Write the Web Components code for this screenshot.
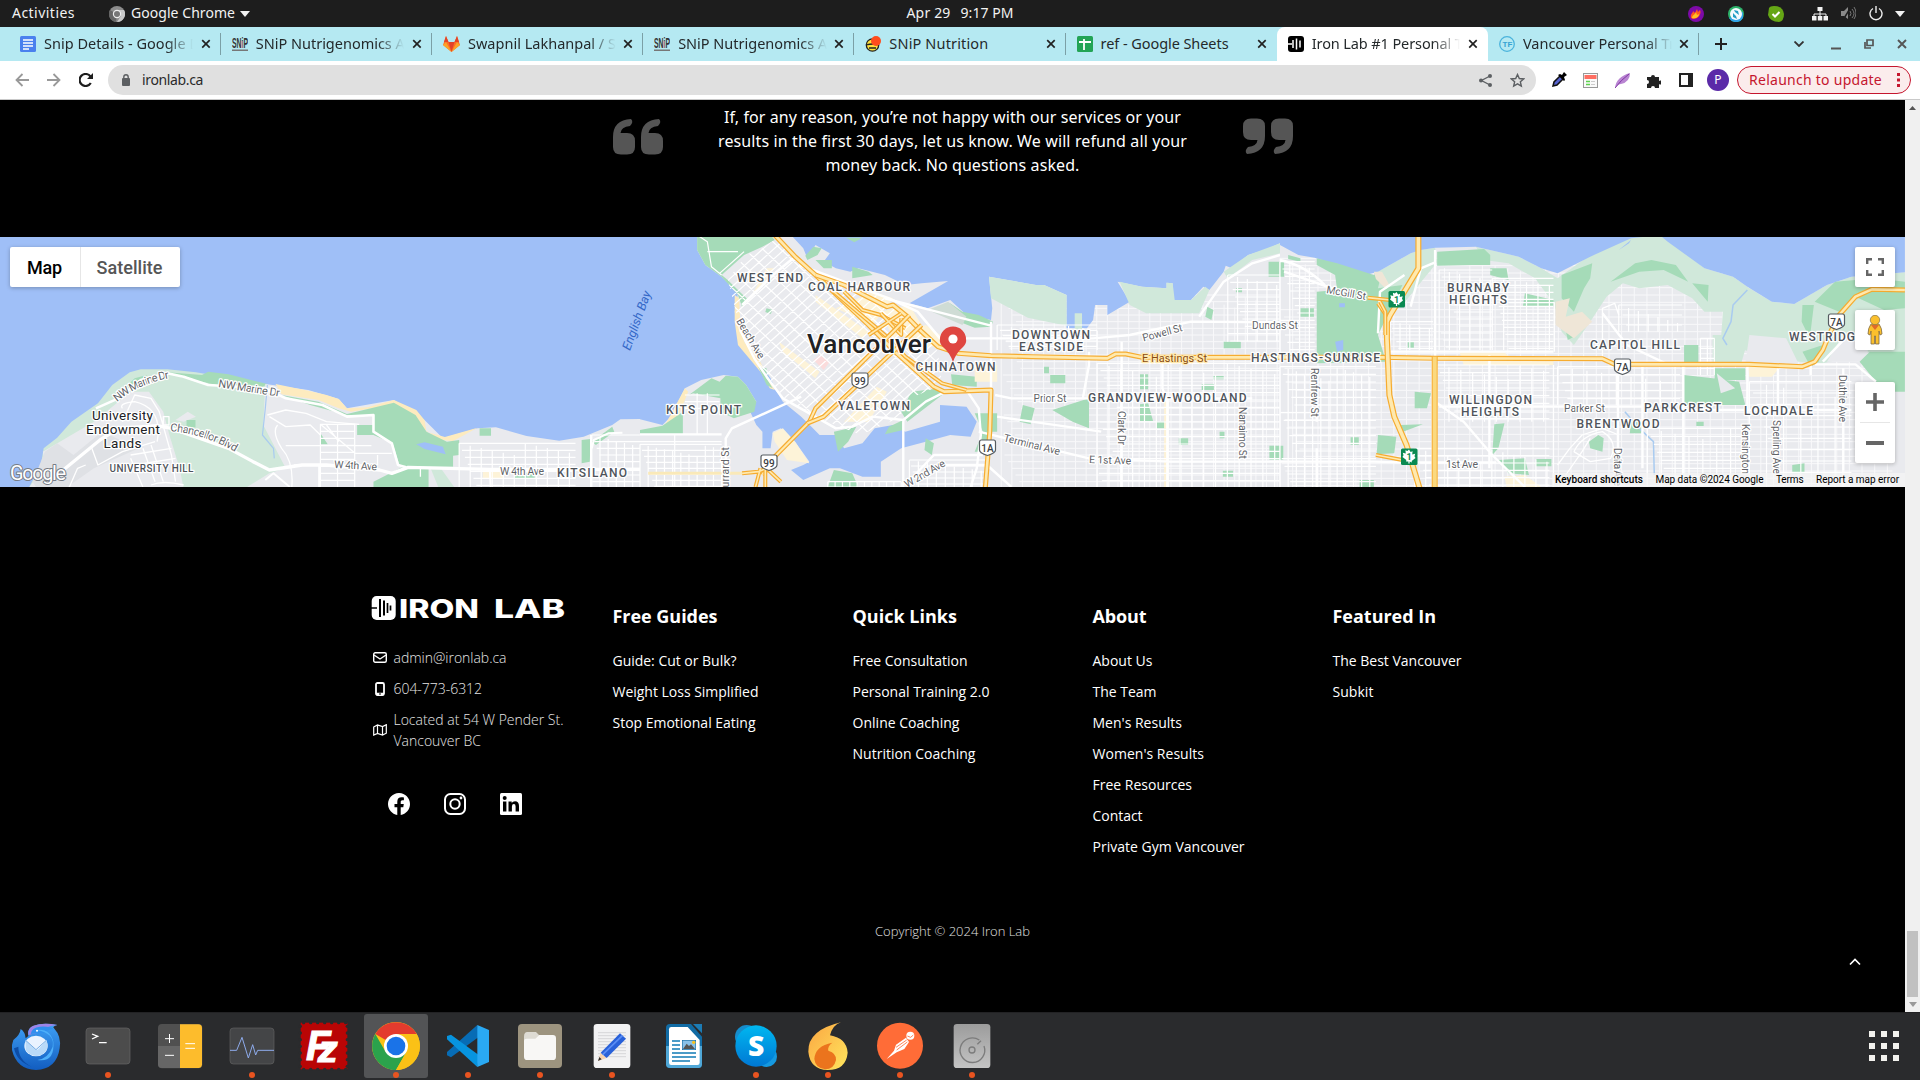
<!DOCTYPE html>
<html lang="en"><head><meta charset="utf-8"><title>Iron Lab #1 Personal Training</title>
<style>html,body{margin:0;width:1920px;height:1080px;overflow:hidden;background:#000}</style></head>
<body><desk-top></desk-top>
<script>
const def=(name,css,html)=>customElements.define(name,class extends HTMLElement{
  constructor(){super();this.attachShadow({mode:'open'}).innerHTML=`<style>*{box-sizing:border-box}svg{display:block;flex:none}${css}</style>${typeof html==='function'?html(this):html}`}
});
const UI='font-family:"Noto Sans","Open Sans",sans-serif;';

def('desk-top',':host{display:flex;flex-direction:column;width:1920px;height:1080px;overflow:hidden}',
`<system-bar></system-bar><tab-strip></tab-strip><tool-bar></tool-bar><page-view></page-view><app-dock></app-dock>`);

/* ---------- system bar ---------- */
def('system-bar',`:host{display:flex;height:27px;flex:none;background:#1d1d1d;color:#f2f2f2;${UI}font-size:14px;line-height:25px;justify-content:space-between;padding:0 14px 0 12px}
div{display:flex;align-items:center}fit-text{height:27px}.l,.r{width:520px}.c{padding-left:2px;gap:10px}.r{justify-content:flex-end;padding-right:1px}`,
`<div class="l"><fit-text w="63">Activities</fit-text>
<svg style="margin:0 6px 0 34px" width="16" height="16" viewBox="0 0 16 16"><circle cx="8" cy="8" r="8" fill="#8c8c8c"/><path d="M8 8L1 4A8 8 0 0 0 7 16z" fill="#666"/><path d="M8 4h7A8 8 0 0 1 8 16l4-6z" fill="#c9c9c9"/><circle cx="8" cy="8" r="4.2" fill="#eee"/><circle cx="8" cy="8" r="3" fill="#777"/></svg>
<fit-text w="104">Google Chrome</fit-text><svg style="margin-left:5px" width="10" height="6"><path d="M0 0h10L5 6z" fill="#f2f2f2"/></svg></div>
<div class="c"><fit-text w="44">Apr 29</fit-text><fit-text w="53">9:17 PM</fit-text></div>
<div class="r">
<svg width="16" height="16"><circle cx="8" cy="8" r="8" fill="#7d0aa8"/><path d="M3 12C2 8 5 7 5 5l2 2 2-4 1 3 2-2c2 4-2 9-7 9z" fill="#ff5a1f"/><path d="M4 12c0-3 3-3 4-6l1 3 2-1c0 3-3 5-7 4z" fill="#ffc222"/></svg>
<svg style="margin-left:24px" width="16" height="16"><circle cx="8" cy="8" r="8" fill="#2db36a"/><path d="M1 12A8 8 0 0 0 15 12L15 6z" fill="#31a3e8"/><circle cx="8" cy="8" r="6" fill="#f4fbff"/><path d="M6 4l4 1 1 4-4-3zM5 7l3 3 1 3-4-2z" fill="#239ec4"/></svg>
<svg style="margin-left:24px" width="16" height="16"><path d="M1 2Q2 0 6 0Q15 0 16 8Q16 15 11 16Q2 16 0 9z" fill="#65a615"/><path d="M4.500 8l2.500 2.500L11.500 6" stroke="#fff" stroke-width="2" fill="none"/></svg>
<svg style="margin-left:28px" width="16" height="14"><path d="M5.500 0h5v4h-5zM0 9h4.500v4.500H0zM5.800 9h4.500v4.500H5.800zM11.500 9H16v4.500h-4.500z" fill="#f2f2f2"/><path d="M8 4v5M2 9V7h12v2" stroke="#f2f2f2" fill="none"/></svg>
<svg style="margin-left:13px" width="15" height="15"><path d="M0 5h3l4-4v12L3 10H0z" fill="#898989"/><path d="M9 5q2 2.500 0 5M11 3q4 4.500 0 9M13 1q4 6 0 12" stroke="#777" fill="none"/><path d="M2 14L10 1" stroke="#1d1d1d" stroke-width="1.500"/></svg>
<svg style="margin-left:13px" width="14" height="15"><path d="M4 2.500A6 6 0 1 0 10 2.500M7 0v7" stroke="#eee" stroke-width="1.400" fill="none"/></svg>
<svg style="margin-left:12px" width="10" height="6"><path d="M0 0h10L5 6z" fill="#f2f2f2"/></svg></div>`);

/* ---------- tabs ---------- */
def('chrome-tab',`:host{display:flex;align-items:center;position:relative;width:211.200px;height:34px;padding:0 9px 0 11px;flex:none;border-right:1px solid #719aa0;border-image:linear-gradient(#0000 7px,#7ba0a6 7px,#7ba0a6 27px,#0000 27px) 1}
:host([first]){width:211.800px}:host([noline]){border-color:transparent;border-image:none}
:host([active]){background:#fff;border-radius:8px 8px 0 0;border-color:transparent;border-image:none}
.t{width:149px;margin-left:8px;padding-bottom:2px;overflow:hidden;white-space:nowrap;-webkit-mask-image:linear-gradient(90deg,#000 82%,#0000 100%)}
:host([short]) .t{-webkit-mask-image:none}svg{margin-left:7.500px}`,
`<slot name="icon"></slot><div class="t"><slot></slot></div><svg width="10" height="10"><path d="M1.200 1.200l7.500 7.500M8.700 1.200L1.200 8.700" stroke="#222" stroke-width="1.700"/></svg>`);
const snip='<svg slot="icon" width="16" height="16"><text x="0" y="12" font-family="Liberation Sans" font-weight="bold" font-size="14" textLength="16" lengthAdjust="spacingAndGlyphs" fill="#333">SNiP</text><rect y="13.500" width="16" height="1.500" fill="#777"/><path d="M10 5v7" stroke="#e9a" /></svg>';
def('tab-strip',`:host{display:flex;height:34px;flex:none;background:#b5e9f2;padding-left:9px;align-items:center;${UI}font-size:14.500px;color:#24292b}svg{flex:none}`,
`<chrome-tab first><svg slot="icon" width="16" height="16"><rect width="16" height="16" rx="1.500" fill="#4a80ee"/><path d="M3 4h10M3 7h10M3 10h10M3 13h6" stroke="#fff" stroke-width="1.500"/></svg><fit-text w="156">Snip Details - Google D</fit-text></chrome-tab>
<chrome-tab>${snip}<fit-text w="149">SNiP Nutrigenomics A</fit-text></chrome-tab>
<chrome-tab><svg slot="icon" width="17" height="16" viewBox="0 0 17 16"><path d="M0 9L3 0l2.500 6h6L14 0l3 9-8.500 7z" fill="#fc6d26"/><path d="M5.500 6h6l-3 10z" fill="#e24329"/><path d="M0 9l8.500 7L3 6zM17 9l-8.500 7L14 6z" fill="#fca326"/><path d="M3 0l2.500 6H1zM14 0l-2.500 6H16z" fill="#e24329"/></svg><fit-text w="148">Swapnil Lakhanpal / S</fit-text></chrome-tab>
<chrome-tab>${snip}<fit-text w="149">SNiP Nutrigenomics A</fit-text></chrome-tab>
<chrome-tab short><svg slot="icon" width="16" height="16"><circle cx="7.500" cy="9" r="6.200" fill="#ffe13a" stroke="#222" stroke-width="1.300"/><path d="M1 9q7-2 13 0M4 12h7" stroke="#222" stroke-width="1.300" fill="none"/><circle cx="11" cy="5" r="5" fill="#ff4d1d"/></svg><fit-text w="99">SNiP Nutrition</fit-text></chrome-tab>
<chrome-tab short noline><svg slot="icon" width="16" height="16"><rect width="16" height="16" rx="1.500" fill="#23a455"/><path d="M2 6h12M7 3v11" stroke="#fff" stroke-width="1.800"/></svg><fit-text w="128">ref - Google Sheets</fit-text></chrome-tab>
<chrome-tab active><svg slot="icon" width="16" height="16"><rect width="16" height="16" rx="3" fill="#000"/><path d="M0 8h4M5 4v8M8.500 2.500v11M12 4.500v7" stroke="#fff" stroke-width="1.500"/></svg><fit-text w="151">Iron Lab #1 Personal T</fit-text></chrome-tab>
<chrome-tab><svg slot="icon" width="16" height="16"><circle cx="8" cy="8" r="7.300" fill="#b5e9f2" stroke="#4ab3dc" stroke-width="1.300"/><text x="3.500" y="11" font-family="Liberation Sans" font-weight="bold" font-size="8" fill="#36a3d2">TF</text></svg><fit-text w="152">Vancouver Personal Tr</fit-text></chrome-tab>
<svg style="margin-left:16px" width="12" height="12"><path d="M6 0v12M0 6h12" stroke="#222" stroke-width="2"/></svg>
<svg style="margin-left:67px" width="10" height="6"><path d="M.5.5L5 5 9.500.5" stroke="#333" stroke-width="1.800" fill="none"/></svg>
<svg style="margin-left:27px" width="10" height="11"><path d="M0 9.500h10" stroke="#555" stroke-width="2"/></svg>
<svg style="margin-left:23px" width="10" height="10"><path d="M3 1h6v5.500H3zM1 3v6h6" stroke="#555" stroke-width="1.700" fill="none"/></svg>
<svg style="margin-left:23px" width="10" height="10"><path d="M1 1l8 8M9 1L1 9" stroke="#555" stroke-width="1.900"/></svg>`);

/* ---------- toolbar ---------- */
def('tool-bar',`:host{display:flex;height:39px;flex:none;background:#fff;border-bottom:1px solid #c9c9c9;align-items:center;padding-left:15px;${UI}font-size:14px}
.o{display:flex;align-items:center;width:1428px;height:30px;border-radius:15px;background:#e0e0e0;margin-left:15px;padding:0 11px 0 14px;color:#2b2b2b}
fit-text{padding-bottom:1px}.o fit-text{margin-left:12px;flex:1}.p{width:22px;height:22px;border-radius:50%;background:#5b2aa8;color:#fff;font-size:12px;line-height:22px;text-align:center;margin-left:14px}
.u{display:flex;align-items:center;width:174px;height:28px;margin-left:8px;border:1.500px solid #c5162e;border-radius:14px;background:#fbecec;color:#c5162e;padding-left:11px}`,
`<svg width="14" height="14"><path d="M14 7H1.500M7.500 1L1.500 7l6 6" stroke="#999" stroke-width="1.800" fill="none"/></svg>
<svg style="margin-left:18px" width="14" height="14"><path d="M0 7h12.500M6.500 1l6 6-6 6" stroke="#999" stroke-width="1.800" fill="none"/></svg>
<svg style="margin-left:18px" width="14" height="14"><path d="M11.800 10A6 6 0 1 1 11.500 3.500" stroke="#1d1d1d" stroke-width="2.200" fill="none"/><path d="M14 0v6H8z" fill="#1d1d1d"/></svg>
<div class="o"><svg width="8" height="12"><rect y="4" width="8" height="8" rx="1" fill="#5c5f62"/><path d="M1.800 5V3a2.200 2.200 0 0 1 4.400 0v2" stroke="#5c5f62" stroke-width="1.400" fill="none"/></svg><fit-text w="61">ironlab.ca</fit-text>
<svg width="13" height="13"><path d="M11 2L2.500 6.500 11 11" stroke="#5c5f62" stroke-width="1.400" fill="none"/><circle cx="11" cy="2" r="2" fill="#5c5f62"/><circle cx="2" cy="6.500" r="2" fill="#5c5f62"/><circle cx="11" cy="11" r="2" fill="#5c5f62"/></svg>
<svg style="margin-left:18px" width="15" height="15" viewBox="0 0 24 24"><path d="M12 2.500l2.900 6.300 6.900.7-5.200 4.600 1.500 6.800L12 17.400l-6.100 3.500 1.500-6.800L2.200 9.500l6.900-.7z" stroke="#5c5f62" stroke-width="2.300" fill="none"/></svg></div>
<svg style="margin-left:15px" width="16" height="16"><path d="M2 14l1-4 6-6 3 3-6 6z" fill="#5663cf" stroke="#111" stroke-width="1.500"/><path d="M7 3l2-1 2 1 2-3 3 3-3 2 1 3-1 1z" fill="#000"/></svg>
<svg style="margin-left:16px" width="15" height="15"><rect x=".5" y=".5" width="14" height="14" fill="#fafafa" stroke="#999"/><rect x="1.500" y="2" width="12" height="4" fill="#ff6e62"/><path d="M3 8.500h4M3 11.500h4" stroke="#5fd14f" stroke-width="1.500"/><path d="M8 8.500h4M8 11.500h4" stroke="#ccc"/></svg>
<svg style="margin-left:17px" width="15" height="15"><path d="M0 15Q1 4 15 0q0 9-9 11-3 0-6 4z" fill="#b985d2"/><path d="M0 15Q6 7 14 1" stroke="#8137a5" fill="none"/></svg>
<svg style="margin-left:16px" width="15" height="15"><path d="M1 4h4a2 2 0 1 1 4 0h4v4a2 2 0 1 1 0 3v4H9a2 2 0 0 0-4 0H1v-4a2 2 0 0 0 0-4z" fill="#222"/></svg>
<svg style="margin-left:18px" width="14" height="14"><rect x="1" y="1" width="12" height="12" stroke="#222" stroke-width="2" fill="#fff"/><path d="M9 0h5v14H9z" fill="#222"/></svg>
<div class="p">P</div><div class="u"><fit-text w="133">Relaunch to update</fit-text><svg style="margin-left:15px" width="4" height="14"><path d="M0 0h3v3H0zM0 5.500h3v3H0zM0 11h3v3H0z" fill="#c5162e"/></svg></div>`);

/* ---------- page ---------- */
def('page-view',':host{display:flex;height:912px;flex:none;background:#000}main{width:1905px;height:912px;display:flex;flex-direction:column;position:relative}.up{position:absolute;left:1849px;top:858px}',
`<main><guarantee-quote></guarantee-quote><city-map></city-map><site-footer></site-footer><svg class="up" width="12" height="8"><path d="M1 6.500L6 1.500l5 5" stroke="#fff" stroke-width="1.700" fill="none"/></svg></main><scroll-bar></scroll-bar>`);
def('scroll-bar',':host{display:flex;flex-direction:column;align-items:center;justify-content:space-between;width:15px;height:912px;background:#f0f0f0;padding:6px 0 5px}i{width:11px;height:66px;background:#c1c1c1;margin:0 auto 5px;display:block}div{display:flex;flex-direction:column;align-items:center}',
`<svg width="7" height="4"><path d="M0 4h7L3.500 0z" fill="#555"/></svg><div><i></i><svg width="8" height="5"><path d="M0 0h8L4 5z" fill="#999"/></svg></div>`);
def('guarantee-quote',`:host{display:flex;height:137px;flex:none;justify-content:center;align-items:flex-start;gap:55px;color:#fff;font:16px/24px "Noto Sans",sans-serif}
div{display:flex;flex-direction:column;align-items:center;width:470px;padding-top:5px}svg{margin-top:18px}`,
`<svg width="50" height="37" viewBox="0 0 50 37"><g fill="#555"><path d="M18 1Q0 2 0 19V29Q0 36.500 8 36.500H14Q22 36.500 22 29V23Q22 15 14 15H7.500Q8 9 17 8Q21 4 18 1Z"/><path transform="translate(28)" d="M18 1Q0 2 0 19V29Q0 36.500 8 36.500H14Q22 36.500 22 29V23Q22 15 14 15H7.500Q8 9 17 8Q21 4 18 1Z"/></g></svg>
<div><fit-text w="457">If, for any reason, you’re not happy with our services or your</fit-text><fit-text w="469">results in the first 30 days, let us know. We will refund all your</fit-text><fit-text w="254">money back. No questions asked.</fit-text></div>
<svg width="50" height="37" viewBox="0 0 50 37"><g transform="rotate(180 25 18.500)" fill="#555"><path d="M18 1Q0 2 0 19V29Q0 36.500 8 36.500H14Q22 36.500 22 29V23Q22 15 14 15H7.500Q8 9 17 8Q21 4 18 1Z"/><path transform="translate(28)" d="M18 1Q0 2 0 19V29Q0 36.500 8 36.500H14Q22 36.500 22 29V23Q22 15 14 15H7.500Q8 9 17 8Q21 4 18 1Z"/></g></svg>`);

/* ---------- map ---------- */
const grid=(x0,y0,x1,y1,dx,dy,skip=0)=>{let d='';let n=0;for(let x=x0;x<=x1;x+=dx)d+=`M${x},${y0+((n++*skip)%(dy*2))}V${y1}`;n=0;for(let y=y0;y<=y1;y+=dy)d+=`M${x0+((n++*skip)%(dx*2))},${y}H${x1}`;return d};
const lines=(d,w=1.3,c='#fff')=>`<path d="${d}" fill="none" stroke="${c}" stroke-width="${w}" vector-effect="non-scaling-stroke" stroke-linejoin="round"/>`;
const hw=(d,w=5)=>lines(d,w,'#f6ac30')+lines(d,w-2.400,'#ffe9ae');
const poly=(d,c)=>`<path d="${d}z" fill="${c}"/>`;
const G='#a5dbb8',L='#d0e8da',W='#9fbff7',S='#fdebbf',D='#e9eaee',Y='#fdf3d8';
const tag=(t,x,y,w,s,cls='',r=0)=>`<text class="${cls}" font-size="${s}" transform="translate(${x},${y}) rotate(${r})" textLength="${w}">${t}</text>`;
const shield=(t,x,y)=>`<path d="M${x-6},${y-7.500}h12q2 0 2 2v8q0 3-8 5.500q-8-2.500-8-5.500v-8q0-2 2-2z" fill="#fff" stroke="#555b60" stroke-width="1.200"/><text class="sh" x="${x}" y="${y+4}" text-anchor="middle" font-size="10">${t}</text>`;
const leaf=(x,y)=>`<rect x="${x-8}" y="${y-8}" width="16.500" height="16.500" rx="1.500" fill="#0b8a52"/><path transform="translate(${x},${y})" d="M0-7l1.600 2.500 2-.8-.4 3.300 3-.8-.7 2.600 1 1.600-3.800 3 .2 1.500L.6 5v2h-1.200V5l-2.300-.1.200-1.500-3.800-3 1-1.600-.7-2.600 3 .8-.4-3.300 2 .8z" fill="#fff"/><text class="lf" x="${x}" y="${y+3.500}" text-anchor="middle" font-size="9">1</text>`;

const west=[
 poly('M70,760L100,690 107,640 140,608 175,560 240,505 275,450 318,412 345,403 410,403 480,412 640,445 720,470V760',L),
 poly('M290,478L330,430 360,420 345,450zM410,412L495,420 510,410 560,418 655,447 640,458 540,452 440,425',G),
 poly('M105,650L230,560 290,500 320,470 365,470 400,530 415,600 440,700 450,760H70L110,690',D),
 poly('M80,740L110,650 140,625 180,660 250,590 340,640 230,700 160,760H90','#dfe1e5'),
 poly('M650,447L755,465 830,492 850,520 965,495 1040,555 1085,610 1170,580 1215,577 1290,603 1370,617 1430,605 1500,570 1520,553 1568,552V760H600L660,715 700,700 645,570',D),
 poly('M430,555L460,530 480,545 450,560',D),poly('M457,555h22v22h-22',G),
 poly('M675,447L755,467 800,480 830,492 850,520 900,517 965,495 1020,525 1040,555 1045,590 1090,606 1170,578 1110,618 1080,615 1035,580 1000,530 960,510 860,530 830,520 780,495 690,478',S),
 poly('M690,480L780,500 850,537 965,503 1018,540 1045,590 1095,620 1125,615V660L1110,662V695H980L962,625 915,600H875V570H915V540H850L760,510',G),
 poly('M915,740L985,697H1050V760H915M785,595L803,628H785zM1175,580h28v22h-28zM1425,615L1447,612 1445,680 1425,685zM1450,620L1500,575 1505,590 1460,630M1260,715h50v14h-50',G),
 poly('M1055,700H1080L1115,760H1075',L),
 poly('M1020,628L1040,622 1085,635 1092,658 1040,642',W),
 poly('M1183,700h50v30h-50',Y),
 lines('M655,450L650,520 643,600 670,640 672,670',1.2,'#a9cbf0'),
 lines(grid(1125,625,1410,756,27,21,7),1.2),lines(grid(1450,600,1568,756,20,20,6),1.2),lines(grid(785,568,870,756,42,21),1.2),lines('M700,632H910M870,655H960M720,690H910M925,660V690M1030,700V725'),
 lines('M655,540L700,525 750,535 800,560 880,568M660,545L700,575 760,570 785,600M680,570Q665,590 690,640Q720,680 715,756M785,568L870,655M800,570L830,620'),
 lines('M300,560L330,480 370,490 390,530 420,660 430,740M300,520Q290,505 330,500Q400,520 385,620M225,640L240,690 300,650 380,620M320,670L350,756M350,640L380,740M370,630L400,740M320,660L420,640M330,690L430,670M170,756L190,700 210,690M370,750Q400,735 450,750M400,545h14v25h-14z'),
 lines('M155,705L245,615 290,580 385,572 420,580 560,640 620,680 660,705 740,690 800,690 930,705 960,715 1000,697 1200,703 1568,703',3.300),
 lines('M235,520L290,490 345,435 410,415 450,425 510,450 650,460 700,490 790,510 850,545 915,540V590L960,625 975,690 995,697',2.600),
 lines('M1450,640L1455,615 1490,595 1525,593M1448,600V756M782,690V756M1200,703L1202,756M650,735L670,715 710,756',2)
].join('');

let dt='';for(let i=-40;i<60;i++)dt+=`M${i*27},760L${i*27+690},0`;for(let i=-30;i<60;i++)dt+=`M${i*44},0L${i*44+660},760`;
const centre=[
 `<rect width="1569" height="765" fill="${D}"/>`,
 lines(grid(885,180,1568,756,26,20,9),1,'#f8f8fa'),
 poly('M0,0H140V45L160,90 200,125 240,175 232,230 240,290 250,330 290,380 320,430 335,470 350,500 395,545 420,575 440,600 480,600 500,640 545,625 575,580 620,570 650,590 735,560 735,510 800,515 825,560 810,605 760,600 700,620 640,640 590,680 590,725 545,725 490,700 465,700 400,735 370,705 400,690 415,680 380,620 345,580 325,590 320,640 300,640 300,590 285,570 270,530 285,500 260,450 240,425 205,420 150,435 110,460 75,545 55,570 0,553',W),
 poly('M370,0L400,40 410,70 430,30 465,55 450,80 480,100 515,110 535,100 600,120 650,150 690,145 755,138 660,205 705,220 760,195 800,240 860,255 863,220 855,125 970,150 990,150 1045,180V280H1095L1110,255 1115,210H1145V240L1200,200 1170,140 1230,155 1290,160V143L1305,145V195L1350,195 1380,155 1395,165 1430,110 1435,92 1450,100 1490,60 1530,45 1568,25V0',W),
 poly('M140,0H320L330,15 300,35 255,60 200,120 215,135 265,195 250,215 240,180 200,125 160,90 140,45M405,62L425,35 445,40 435,60 410,75M505,8h40L525,22M520,95L560,110 570,120 520,130M430,75h40v25H450M760,205L790,230 830,240 865,260 860,275 820,278 760,250',G),
 poly('M855,125L970,150 990,150 1045,180V272L950,248 860,190M1175,140L1230,155 1290,160V143L1305,145 1310,195 1350,195 1385,155 1395,165 1370,235 1240,235 1200,210M1065,235h18v50h-18M1430,110L1490,60 1568,25V55L1500,75 1440,130',L),
 poly('M705,225L755,200 800,245 790,270',"#cfdcd5"),
 poly('M232,180L243,190 245,250 255,320 290,370 330,465 318,460 295,410 240,330 232,260M110,460L118,470 95,540 60,572 75,540',S),
 poly('M325,595L350,580 380,620 415,685 360,675 330,620',Y),
 poly('M120,480L175,430 195,440 210,422 240,425 260,450 285,500 280,530 230,550 197,530V490L130,475M0,585L55,572 105,530V598H0M290,395L310,400V430L325,460 310,450M310,220l15,5-5,12-13-6M640,530L665,470 735,460 740,480 655,560M475,590L530,575 510,620 485,650M610,575L645,555V585L600,598M762,418L825,425V455L765,450M930,560L938,510 967,520 957,568M1010,525L1100,490V580L1060,560M820,535h55v55h-20l-10,60h-25l20-60zM700,610L720,625 715,660 697,645M475,705L520,715 535,756H460zM990,395h12v20h-12M1005,420h37v25h-37M1225,418h20v45h-20M1225,508L1245,505 1257,558H1225zM1265,560h23v20h-23M1320,610h23v20h-23M1430,320h42v20h-42M1376,448h30v17h-30M1405,423h25v10h-25M1428,707h25v18h-25M1420,590h12v20h-12M1540,80h28v45h-28M1542,632h26v42h-26M1460,160l15,0v12h-15M1390,215l15,10-5,30-15-10',G),
 poly('M480,220L570,170 620,190 570,270zM340,320L440,410 430,430 350,350zM430,180L560,290 545,310 430,200zM500,560L580,455 605,470 560,560zM590,230L660,210 690,270 620,310zM310,100h20L270,190zM640,300L700,270 760,320 700,340zM1284,500h12v256h-12zM820,390h55v50h-55z',Y),
 poly('M425,375L440,360 465,380 450,405','#fbdcdc'),
 `<clipPath id="dc"><path d="M215,135L260,60 300,40 335,10 430,120 600,190 690,290 730,350 740,450 640,500 640,545 540,600 500,580 420,540 350,485 310,420 250,300z"/></clipPath><g clip-path="url(#dc)">${lines(dt,1.2)}</g>`,
 lines('M140,0L165,20 175,95 200,120M255,50L195,115M165,50L240,50M110,480H195M110,500H195M110,520H195M140,475V598M165,475V598M0,620H200M85,600V756',1.2),
 lines(grid(0,628,200,756,20,18,5)+grid(1120,385,1568,756,29,22,8)+grid(1440,120,1568,320,24,22,6)+grid(460,740,640,756,18,16)+grid(660,675,850,756,22,18,4)+grid(875,270,1120,345,35,16,7),1.2),
 lines('M245,285L280,370 310,425 350,490 480,580 520,575 570,545 645,555 700,500 740,475 800,465 830,520 835,600 825,700 810,756M600,190L860,272M645,555V756M210,756V610L225,580 395,485M0,598H200M830,590L1100,670 1300,680 1568,680M740,310H1110L1200,300 1350,260 1568,262M1370,245L1430,140 1500,85 1568,60M875,545L1130,590M740,690L850,690 910,756M1180,320V756M870,480L910,490H1500M1280,360V460L1292,500V756M650,750L720,660H840M860,260V470M1100,350V390L1085,490',2.400),
 lines('M390,90L610,190 680,230 735,310M250,210L335,110 385,60',2.500),
 hw('M330,0L380,65 430,120 560,270 625,350 720,455 745,470 860,465 857,590 846,760'),
 hw('M430,120L500,150 605,215 620,210 650,240 690,290 730,335 780,355 860,362 960,365 1145,370 1165,357 1190,357 1230,367 1568,367'),
 hw('M465,160L600,300 650,365 740,445 800,465',4),hw('M500,170L545,225 590,240 650,280',4),hw('M590,235L640,300 640,250M560,300L640,235',4),
 hw('M330,665L415,560 430,520 620,290 660,240',4.500),hw('M410,565L450,545 620,350 690,270',4.500),hw('M300,720L330,665',5),hw('M250,715L290,710 310,700 345,740M283,756L295,700M307,756V700',4),
 lines('M20,715H250',3,'#fae9b8')
].join('');

const east=[
 `<rect width="1540" height="765" fill="${D}"/>`,
 lines(grid(0,70,1500,756,31,22,9),1,'#f8f8fa'),
 poly('M230,115L255,100 320,55 345,45 380,38 385,82 300,210 240,160M480,35L585,65 640,100 680,130 690,190 670,205 625,130 560,85 500,75M680,130L760,60 860,0H940L1040,100 1110,125 1150,160 1205,200 1260,207 1340,150 1400,125 1531,112V360L1450,350 1330,385 1270,380 1200,360 1150,350 1080,320 1085,230 1040,230 1010,190 950,150 880,160 840,145 800,185 760,260 720,330 690,290 670,200M1060,300H1150L1130,385H1060',L),
 poly('M1150,300L1240,310 1270,385H1140zM1380,300H1440V380H1340z',D),
 poly('M0,0V30L45,60 85,68 140,90 210,120 240,110 255,100 320,55 345,45 380,38 480,35 585,65 640,100 680,115 760,65 860,10 930,0 950,20 1040,100 1110,125 1145,155 1205,200 1260,207 1340,150 1400,125 1531,112V0',W),
 poly('M90,70L140,85 230,120 250,110 240,160 300,150 240,300 260,380 90,385V170L140,165 135,120 90,90M385,50L500,42 515,60V90H470L385,92M0,75h10v50H0M50,220h33v25H50M20,60L50,70V80L20,72M515,100l40,0 5,35-45-15M600,175L670,195V215H595M690,120L765,85 760,130 745,160 720,230 690,190M810,140L870,85 910,75 970,90 1000,140 940,105 880,110zM1010,145L1050,150 1048,200zM1280,210h28l-10,100-20,-50M1310,200L1360,140 1460,130 1531,140V220L1480,225 1410,185 1370,230zM990,330h35v60h-35M990,420L1060,430 1125,440 1140,510H990M1280,350L1330,330 1320,380 1300,395M1445,350H1531V470H1480L1420,380M330,470L370,475 360,520H330M525,568L550,565 535,640 520,660M350,568l-55,25V570M240,600L285,605 280,655 237,658M535,675L600,670 610,720 560,715M627,672h38v22h-38M757,620L780,600 793,610 790,650 760,640M1255,690l30-5v30h-30M860,560h30l-5,35h-28M1065,400h75v35h-75M195,735h35v21h-35M173,607h20v22h-20M700,285l15-10 5,30-15,10M313,320h15v20h-15M0,632h8v42H0M1020,560h18v13h-18',G),
 poly('M230,110h20l18,40-8,12-25-30M675,200L710,190 700,245 740,230 765,260 720,310 675,270','#efe6d7'),
 poly('M440,352H550L560,365H670V390H450M1147,395L1230,390 1205,425 1150,425M550,725L600,720 640,756H555',Y),
 poly('M1070,415L1115,460 1080,475',D),
 poly('M135,320l20-5v30l-15,5M145,205h14v12h-14M830,45L860,15 855,25',W),
 lines('M1145,165L1110,210 1105,260 1085,310 1095,330M845,530L880,580 915,620 917,720',1.5,'#a9cbf0'),lines('M1225,148h18v55',1.500,W),
 lines(grid(0,80,85,360,24,22,6)+grid(0,395,235,756,20,23,7)+grid(390,105,520,345,25,21,6)+grid(520,130,670,345,28,21,4)+grid(270,260,375,345,24,20,5)+grid(385,390,660,560,29,23,7)+grid(330,640,660,756,27,22,7)+grid(830,210,985,290,24,30,9)+grid(680,395,980,510,36,24,6)+grid(900,580,1130,756,34,24,8)+grid(1150,440,1400,756,42,34,9)+grid(1030,310,1065,420,17,30),1.200),
 lines('M680,690L710,640 740,600 790,580 830,600M700,720L740,650 760,610M720,650Q740,600 790,590Q830,620 810,670L760,680 720,650M790,371V220L820,205 830,240M670,390V756M672,350V203H560'),
 lines('M790,235L850,330 945,385M380,500L450,560 520,660 600,756M0,680H230L300,682H530M390,515H890M920,525H1400M380,45V370M270,350H670M988,388V756M1145,388V540M1220,395V540M1380,400V756M1310,388H1410L1460,440M1300,388V420M1330,380L1400,290M828,420V756M320,215L345,100 380,82M240,295L245,170 305,120M90,400V560M90,640V756M0,75Q60,90 110,150M10,110L140,165M513,360V700M888,388V700',2.400),
 hw('M0,367H250L380,370 790,371 820,388 1150,388 1280,395 1310,380 1330,345 1345,300 1370,240 1410,185 1450,163 1531,165'),
 lines('M379,365V760',6,'#f6ac30'),lines('M379,365V760',4,'#fbd97f'),
 hw('M215,188L270,195M240,205L260,240M235,660L300,675',4),
 hw('M339,0V100L270,240 262,260V310L268,480 280,545 310,630 342,760',6),
 hw('M245,200L258,230 258,300',4)
].join('');

def('city-map',`:host{display:block;width:1905px;height:250px;flex:none;position:relative;overflow:hidden;font-family:Roboto,sans-serif}
.map text{font-family:Roboto,sans-serif;fill:#5f6368;paint-order:stroke;stroke:#fff;stroke-width:2.500px;stroke-linejoin:round}
.map .a{font-weight:500;fill:#4f545b}.map .k{fill:#202124;font-weight:500}.map .n{fill:#202124}.map .b{fill:#3569c8;stroke:none;font-style:italic}.map .h{fill:#8a4b12;stroke:#ffe9ae}.map .sh{stroke:none;fill:#3c4043;font-weight:500}.map .lf{stroke:none;fill:#0b8a52;font-weight:700}
.box{position:absolute;display:flex;background:#fff;border-radius:2px;box-shadow:0 1px 4px #0004;align-items:center;justify-content:center;width:40px;height:40px;left:1855px}
.type{left:10px;top:10px;width:170px;font-size:18px;font-weight:500;color:#000}.type div{height:40px;line-height:42px;padding-left:17px;width:69.500px}.type div+div{width:100.500px;color:#565656;border-left:1px solid #e6e6e6;padding-left:16px}
.zoom{top:145px;height:81px;flex-direction:column}.zoom div{height:40px;display:flex;align-items:center}.zoom hr{width:30px;height:1px;border:0;background:#e6e6e6;margin:0}
.at{position:absolute;right:0;bottom:0;height:14px;width:353px;display:flex;gap:12.500px;padding-left:3px;background:#f5f5f5b8;font-size:10px;line-height:14px;color:#000}`,
`<svg class="map" width="1905" height="250" viewBox="0 237 1905 250"><rect y="237" width="1905" height="250" fill="${W}"/>
<g transform="translate(0,235) scale(.408163,.333333)">${west}</g><g transform="translate(640,235) scale(.408163,.333333)">${centre}</g><g transform="translate(1280,235) scale(.408163,.333333)">${east}</g>
<defs><path id="nw" d="M117,402Q138,384 170,378"/><path id="ch" d="M170,431Q205,434 237,453"/></defs>
<text font-size="11"><textPath href="#nw" textLength="58">NW Marine Dr</textPath></text><text font-size="11"><textPath href="#ch" textLength="69">Chancellor Blvd</textPath></text>
${[['University',92,420,61,13.5,'n'],['Endowment',86,434,74,13.5,'n'],['Lands',103.5,448,38,13.5,'n'],['UNIVERSITY HILL',109.5,472,84,10,'a'],['NW Marine Dr',218,387,62,11,'',9],['W 4th Ave',334,468,43,10.5,'',3],['W 4th Ave',500,475,44,10.5],['KITSILANO',557,477,70,12,'a'],['English Bay',630,351,62,12.5,'b',-70],
['WEST END',737,282,66,12,'a'],['COAL HARBOUR',808,291,102,12,'a'],['DOWNTOWN',1012,339,78,12,'a'],['EASTSIDE',1019,351,64,12,'a'],['CHINATOWN',915.5,371,80,12,'a'],['E Hastings St',1142,362,65,11,'h'],['Powell St',1143.5,341.500,41,10.5,'',-15],['Dundas St',1252,329,46,10.5],['YALETOWN',838,410,72,12,'a'],['KITS POINT',666,414,75,12,'a'],['Prior St',1033.5,402,33,10.5],['GRANDVIEW-WOODLAND',1088,402,158.5,12,'a'],['Clark Dr',1118,411,34,10.5,'',90],['Nanaimo St',1238.5,407,52,10.5,'',90],['Terminal Ave',1003,441,58,10.5,'',14],['E 1st Ave',1089,463,42,10.5,'',2],['W 2nd Ave',907,488,45,10.5,'',-30],['Burrard St',728.5,494,47,10.5,'',-90],['Beach Ave',736,321,45,10.5,'',59],['HASTINGS-SUNRISE',1251,362,129,12,'a'],
['McGill St',1326,293,40,10.5,'',10],['BURNABY',1447,292,62,12,'a'],['HEIGHTS',1449,304,58,12,'a'],['WILLINGDON',1449,404,83,12,'a'],['HEIGHTS',1461,416,58,12,'a'],['CAPITOL HILL',1590,349,90,12,'a'],['WESTRIDG',1789,341,66,12,'a'],['Parker St',1564,411.500,41,10.5],['PARKCREST',1644,412,77,12,'a'],['LOCHDALE',1744,415,69,12,'a'],['BRENTWOOD',1576.500,428,83,12,'a'],['1st Ave',1446,467.500,32,10.5],['Renfrew St',1311,368,49,10.5,'',90],['Delta Ave',1614,448,38,10.5,'',90],['Kensington',1742,424,50,10.5,'',90],['Sperling Ave',1773,420,54,10.5,'',90],['Duthie Ave',1839,375,47,10.5,'',90]].map(a=>tag(...a)).join('')}
<text class="k" x="807" y="353" font-size="25" textLength="124" lengthAdjust="spacingAndGlyphs">Vancouver</text>
${shield('99',860,380.500)+shield('99',769,462.500)+shield('1A',987.5,447.500)+shield('7A',1622.5,366.500)+shield('7A',1836.5,321.500)+leaf(1396.500,299)+leaf(1409,456.500)}
<path d="M953 362Q950 353 943 347Q939 343 940 339A13 12.500 0 0 1 966 339Q967 343 963 347Q956 353 953 362z" fill="#df4641"/><circle cx="953" cy="339" r="4.600" fill="#fff"/>
<text x="10" y="480" font-size="20" textLength="56" style="fill:#fff;stroke:#777d86;stroke-width:2px">Google</text></svg>
<div class="box type"><div><fit-text w="35">Map</fit-text></div><div><fit-text w="66">Satellite</fit-text></div></div>
<div class="box" style="top:10px"><svg width="18" height="18"><path d="M1.200 6V1.200H6M12 1.200h4.800V6M16.800 12v4.800H12M6 16.800H1.200V12" stroke="#666" stroke-width="2.400" fill="none"/></svg></div>
<div class="box" style="top:73px"><svg width="18" height="30" viewBox="0 0 18 30"><path d="M5 9h8q3 4 3 10l-2 1-1-4v13H9.500V21h-1v8H5V16l-1 4-2-1Q2 13 5 9z" fill="#fbc02d" stroke="#7d6b45" stroke-width=".8"/><path d="M5 10h8l-4 5z" fill="#e06b2a"/><circle cx="9" cy="5" r="4.700" fill="#fbc02d" stroke="#806f4b" stroke-width=".7"/></svg></div>
<div class="box zoom"><div><svg width="18" height="18"><path d="M9 0v18M0 9h18" stroke="#666" stroke-width="3.600"/></svg></div><hr><div><svg width="18" height="4"><rect width="18" height="4" fill="#666"/></svg></div></div>
<div class="at"><fit-text w="88" style="font-weight:500">Keyboard shortcuts</fit-text><fit-text w="108">Map data ©2024 Google</fit-text><fit-text w="27.500">Terms</fit-text><fit-text w="83">Report a map error</fit-text></div>`);

/* ---------- footer ---------- */
def('link-column',`:host{display:flex;flex-direction:column;width:240px;flex:none}h3{margin:0 0 15px;font-size:18px;line-height:27px;font-weight:700;color:#fff;display:flex}::slotted(*){height:31px;line-height:31px}`,
el=>`<h3><fit-text w="${el.getAttribute('w')}">${el.getAttribute('heading')}</fit-text></h3><slot></slot>`);
def('contact-line',`:host{display:flex;align-items:center;gap:4.500px;margin-bottom:10px}.i{width:18px;display:flex;justify-content:center}.t{display:flex;flex-direction:column}`,
`<div class="i"><slot name="icon"></slot></div><div class="t"><slot></slot></div>`);
def('brand-logo',':host{display:block}',
`<svg width="194" height="25"><rect width="24" height="24" rx="5" fill="#fff" x=".7"/><path d="M0 12h6" stroke="#000" stroke-width="1.500"/><path d="M9 3v18M13 4.500v15" stroke="#000" stroke-width="2"/><path d="M16.500 7v10M19.500 9.500v5" stroke="#000" stroke-width="1.700"/><g font-family="Inter,sans-serif" font-weight="800" font-size="25.500" fill="#fff"><text x="28" y="21.500" textLength="80" lengthAdjust="spacingAndGlyphs">IRON</text><text x="123" y="21.500" textLength="71" lengthAdjust="spacingAndGlyphs">LAB</text></g></svg>`);
def('site-footer',`:host{display:flex;flex-direction:column;height:525px;flex:none;font:14px/21px "Open Sans","Noto Sans",sans-serif;color:#fff}
.cols{display:flex;padding:109px 0 0 371px;height:435px}.brand{width:241.500px;font-weight:300;color:#e6e6e6}brand-logo{margin-bottom:26px}.links{display:flex;padding-top:7px}
.soc{display:flex;gap:34px;padding:32px 0 0 17px}.cp{display:flex;justify-content:center;font-size:13px;line-height:18px;font-weight:300;color:#e0e0e0}`,
`<div class="cols"><div class="brand"><brand-logo></brand-logo>
<contact-line><svg slot="icon" width="14" height="11"><rect x=".7" y=".7" width="12.600" height="9.600" rx="1.500" stroke="#fff" stroke-width="1.400" fill="none"/><path d="M1 3l6 4 6-4" stroke="#fff" stroke-width="1.400" fill="none"/></svg><fit-text w="113">admin@ironlab.ca</fit-text></contact-line>
<contact-line><svg slot="icon" width="10" height="14"><rect x="1" y="1" width="8" height="12" rx="1.500" stroke="#fff" stroke-width="1.800" fill="none"/><path d="M1 12h8" stroke="#fff" stroke-width="2.500"/><path d="M4 12h2" stroke="#000"/></svg><fit-text w="88.500">604-773-6312</fit-text></contact-line>
<contact-line><svg slot="icon" width="14" height="12"><path d="M.7 3L4.500 1l5 1.500 3.800-1.800v8.500L9.500 11l-5-1.500L.7 11zM4.500 1v8.500M9.500 2.500V11" stroke="#fff" stroke-width="1.200" fill="none"/></svg><fit-text w="170">Located at 54 W Pender St.</fit-text><fit-text w="87.500">Vancouver BC</fit-text></contact-line>
<div class="soc"><svg width="22" height="22" viewBox="0 0 16 16"><path fill="#fff" d="M16 8.049c0-4.446-3.582-8.050-8-8.050C3.580 0-.002 3.603-.002 8.050c0 4.017 2.926 7.347 6.750 7.951v-5.625h-2.030V8.050H6.750V6.275c0-2.017 1.195-3.131 3.022-3.131.876 0 1.791.157 1.791.157v1.980h-1.009c-.993 0-1.303.621-1.303 1.258v1.510h2.218l-.354 2.326H9.250V16c3.824-.604 6.750-3.934 6.750-7.951z"/></svg>
<svg width="22" height="22"><rect x="1" y="1" width="20" height="20" rx="5.500" stroke="#fff" stroke-width="2" fill="none"/><circle cx="11" cy="11" r="4.700" stroke="#fff" stroke-width="2" fill="none"/><circle cx="17" cy="5" r="1.400" fill="#fff"/></svg>
<svg width="22" height="22"><rect width="22" height="22" rx="1.500" fill="#fff"/><path d="M3 8.500h3.400V18.500H3zM8.500 8.500h3.200V10q1-1.700 3.300-1.700 4 0 4 4.700v5.500h-3.400V13.500q0-2.400-1.700-2.400-2 0-2 2.400v5H8.500z" fill="#000"/><circle cx="4.700" cy="5" r="2" fill="#000"/></svg></div></div>
<div class="links"><link-column heading="Free Guides" w="105"><fit-text w="124">Guide: Cut or Bulk?</fit-text><fit-text w="146">Weight Loss Simplified</fit-text><fit-text w="143">Stop Emotional Eating</fit-text></link-column>
<link-column heading="Quick Links" w="104.500"><fit-text w="115">Free Consultation</fit-text><fit-text w="137">Personal Training 2.0</fit-text><fit-text w="107">Online Coaching</fit-text><fit-text w="123">Nutrition Coaching</fit-text></link-column>
<link-column heading="About" w="54"><fit-text w="60">About Us</fit-text><fit-text w="64">The Team</fit-text><fit-text w="89.500">Men's Results</fit-text><fit-text w="111.500">Women's Results</fit-text><fit-text w="99.500">Free Resources</fit-text><fit-text w="50">Contact</fit-text><fit-text w="152">Private Gym Vancouver</fit-text></link-column>
<link-column heading="Featured In" w="103.500"><fit-text w="129">The Best Vancouver</fit-text><fit-text w="41">Subkit</fit-text></link-column></div></div>
<div class="cp"><fit-text w="155">Copyright © 2024 Iron Lab</fit-text></div>`);

/* ---------- dock ---------- */
def('dock-app',`:host{display:block;position:relative;width:72px;height:68px;flex:none}:host([active])::before{content:"";position:absolute;left:4px;top:2px;width:64px;height:64px;border-radius:3px;background:#535456}
:host([running])::after{content:"";position:absolute;left:33px;top:60px;width:6px;height:6px;border-radius:50%;background:#e95420}::slotted(svg){position:relative;display:block}`,'<slot></slot>');
const app=(x,body,attr='running')=>`<dock-app ${attr}><svg width="72" height="68" viewBox="${x} 6 216 204">${body}</svg></dock-app>`;
let teeth='';for(let i=0;i<7;i++){const p=i*21+912;for(const[a,b]of[[p-1,38],[p-1,178],[901,49+i*20],[1042,49+i*20]])teeth+=`<circle cx="${a}" cy="${b}" r="5" fill="#2a2b2d"/>`}
def('app-dock',`:host{display:flex;height:68px;flex:none;background:#2a2b2d;box-shadow:inset 0 1px #222224;padding-right:21px}.g{margin:19px 0 0 auto;display:block}`,
app(0,`<defs><linearGradient id="tb" x2="0" y2="1"><stop stop-color="#3fa0f5"/><stop offset="1" stop-color="#125dc0"/></linearGradient></defs><path d="M40 90Q60 75 62 57Q75 65 77 85L85 78Q80 60 95 50Q125 35 172 45Q155 50 162 55Q185 80 179 115Q170 178 108 180Q50 178 36 120Q34 105 40 90z" fill="url(#tb)"/><path d="M85 75Q82 55 100 47Q130 37 172 45Q130 50 115 68z" fill="#9d84e8"/><path d="M92 72Q95 52 120 50Q150 48 162 58Q150 55 130 68z" fill="#2f8fee"/><path d="M110 60Q165 70 158 110Q145 145 112 150Q165 158 160 95Q150 55 110 60z" fill="#4db0fa"/><path d="M42 115Q50 155 95 170Q55 150 55 110z" fill="#0d4da6"/><ellipse cx="108" cy="108" rx="35" ry="31" fill="#e9f3ff"/><path d="M77 90L105 118Q110 122 116 117L140 90Q150 120 125 135 95 145 77 120z" fill="#b9daf8"/><path d="M78 92L108 119 138 92" stroke="#7bb0e5" stroke-width="3" fill="none"/><circle cx="111" cy="62" r="3" fill="#fff"/>`,'')+
app(216,`<rect x="258" y="54" width="132" height="108" rx="10" fill="#4c4c4c" stroke="#666" stroke-width="2"/><path d="M276 72L293 79 276 87M297 98H320" stroke="#fff" stroke-width="4" fill="none"/>`)+
app(432,`<rect x="474" y="42" width="133" height="133" rx="12" fill="#505050"/><path d="M474 108h66v66h-54q-12 0-12-12z" fill="#666"/><path d="M540 43h55q11 0 11 11v109q0 11-11 11h-55z" fill="#fdbc2c"/><path d="M495 86h27M508.500 72v27M495 136h27M556 101h29M556 115h29" stroke="#fff" stroke-width="3"/>`,'')+
app(648,`<rect x="690" y="54" width="132" height="108" rx="10" fill="#444547" stroke="#626262" stroke-width="2"/><path d="M690 121H710L726 82 745 144 758 104 767 135 773 121H822" stroke="#8eabeb" stroke-width="3" fill="none"/>`)+
app(864,`<rect x="902" y="38" width="140" height="140" fill="#b90505"/>${teeth}<g font-family="Liberation Sans,sans-serif" font-weight="bold" font-style="italic" fill="#fff" stroke="#fff" stroke-width="3"><text x="918" y="149" font-size="126" textLength="74" lengthAdjust="spacingAndGlyphs">F</text><text x="953" y="157" font-size="112" textLength="60" lengthAdjust="spacingAndGlyphs">z</text></g>`,'')+
app(1080,`<circle cx="1188" cy="108" r="72" fill="#fbc116"/><path d="M1188 108L1126 72A72 72 0 0 1 1250 72H1188z" fill="#e33b2e"/><path d="M1126 72A72 72 0 0 0 1188 180L1219 126L1157 126z" fill="#2ba24c"/><path d="M1219 126L1188 180A72 72 0 0 0 1250 72H1188z" fill="#fbc116"/><circle cx="1188" cy="108" r="36" fill="#fff"/><circle cx="1188" cy="108" r="28" fill="#1a73e8"/>`,'active running')+
app(1296,`<path d="M1432 45L1341 126V136L1353 142 1437 80z" fill="#076cb5"/><path d="M1432 171L1341 88V78L1353 74 1437 136z" fill="#0794df"/><path d="M1432 45L1467 60V156L1432 171z" fill="#2aa9f3"/>`)+
app(12,`<rect x="54" y="42" width="132" height="132" rx="12" fill="#9d947f"/><path d="M72 80Q72 66 82 66H108L117 75H160V110H72z" fill="#dedbd3"/><path d="M72 92Q72 86 80 86H106L118 75H158Q168 75 168 85V140Q168 150 158 150H82Q72 150 72 140z" fill="#f8f7f5"/>`)+
app(228,`<rect x="281" y="42" width="110" height="132" rx="10" fill="#f2f2f3"/><path d="M294 68h84M294 77h84M294 86h84M294 95h84M294 104h84M294 113h84M294 122h84M294 131h84M294 140h84" stroke="#c8c8cc" stroke-width="2"/><path d="M294 153L302 128 320 144z" fill="#f7d2ae"/><path d="M294 153L298 141 305 148z" fill="#333"/><path d="M302 128L360 70 378 86 320 144z" fill="#2961d9"/><path d="M308 134L367 77" stroke="#5a8df5" stroke-width="5"/>`)+
app(444,`<path d="M510 42H573L606 80V163Q606 174 595 174H510Q498 174 498 163V54Q498 42 510 42z" fill="#116ba4"/><path d="M498 108H606V163Q606 174 595 174H510Q498 174 498 163z" fill="#4fa7d7"/><path d="M514 51H563L599 90V158Q599 165 592 165H514Q507 165 507 158V58Q507 51 514 51z" fill="#fff"/><path d="M579 42H606V70z" fill="#1c7cb5"/><path d="M516 93h24M516 105h24M516 117h24M516 129h72M516 141h72M516 153h54" stroke="#107bb5" stroke-width="5"/><rect x="547" y="91" width="40" height="28" fill="#8ac1e8" stroke="#116ba4" stroke-width="2"/><path d="M549 117L560 101 567 108 573 103 585 117z" fill="#555"/><circle cx="581" cy="97" r="5" fill="#f7c11c"/>`,'')+
app(660,`<defs><linearGradient id="sk" x2="0" y2="1"><stop stop-color="#00b7f0"/><stop offset="1" stop-color="#0078d4"/></linearGradient></defs><circle cx="740" cy="80" r="35" fill="#168dcc"/><circle cx="800" cy="140" r="31" fill="#1599e0"/><circle cx="768" cy="108" r="62" fill="url(#sk)"/><text x="744" y="138" font-family="Open Sans,sans-serif" font-size="86" font-weight="800" fill="#fff" textLength="49" lengthAdjust="spacingAndGlyphs">S</text>`)+
app(876,`<defs><linearGradient id="fl" x2="1" y2="1"><stop stop-color="#fba541"/><stop offset="1" stop-color="#ffe65e"/></linearGradient></defs><path d="M1023 37Q998 45 990 76Q1040 85 1043 128Q1038 180 983 180Q930 178 925 125Q923 60 1023 37z" fill="url(#fl)"/><path d="M997 98Q982 108 985 122Q1010 130 1008 150Q1002 178 975 178Q946 174 943 147Q945 108 997 98z" fill="#eb741d"/>`)+
app(1092,`<circle cx="1200" cy="107" r="69" fill="#ff6c37"/><circle cx="1231" cy="77" r="12" fill="#fff"/><path d="M1218 83L1188 104 1182 122 1160 147 1190 127 1213 117 1227 96z" fill="#fff"/><path d="M1188 112L1220 90M1190 120L1222 96M1222 78l10 4 8-7" stroke="#ff6c37" stroke-width="2.500" fill="none"/>`)+
app(1308,`<defs><linearGradient id="dk" x2="0" y2="1"><stop stop-color="#9c9c9c"/><stop offset="1" stop-color="#c4c4c4"/></linearGradient></defs><rect x="1361" y="42" width="110" height="132" rx="10" fill="url(#dk)"/><path d="M1452 108A37 37 0 1 1 1438 90M1432 103L1443 92" stroke="#7c7c7c" stroke-width="4" fill="none"/><circle cx="1416" cy="120" r="9" stroke="#7c7c7c" stroke-width="4" fill="none"/>`)+
`<svg class="g" width="30" height="30"><path d="M0 0h6v6H0zM12 0h6v6h-6zM24 0h6v6h-6zM0 12h6v6H0zM12 12h6v6h-6zM24 12h6v6h-6zM0 24h6v6H0zM12 24h6v6h-6zM24 24h6v6h-6z" fill="#f3f2ee"/></svg>`);

/* Text run tracked to an exact advance width; registered last so every ancestor is rendered. */
customElements.define('fit-text',class extends HTMLElement{
  constructor(){super();this.attachShadow({mode:'open'}).innerHTML='<style>:host{display:block;white-space:nowrap}</style><span><slot></slot></span>'}
  connectedCallback(){const s=this.shadowRoot.querySelector('span'),w=+this.getAttribute('w');const n=s.getBoundingClientRect().width,k=this.textContent.length;
    if(w&&n){s.style.letterSpacing=((w-n)/k)+'px'}}
});
</script></body></html>
